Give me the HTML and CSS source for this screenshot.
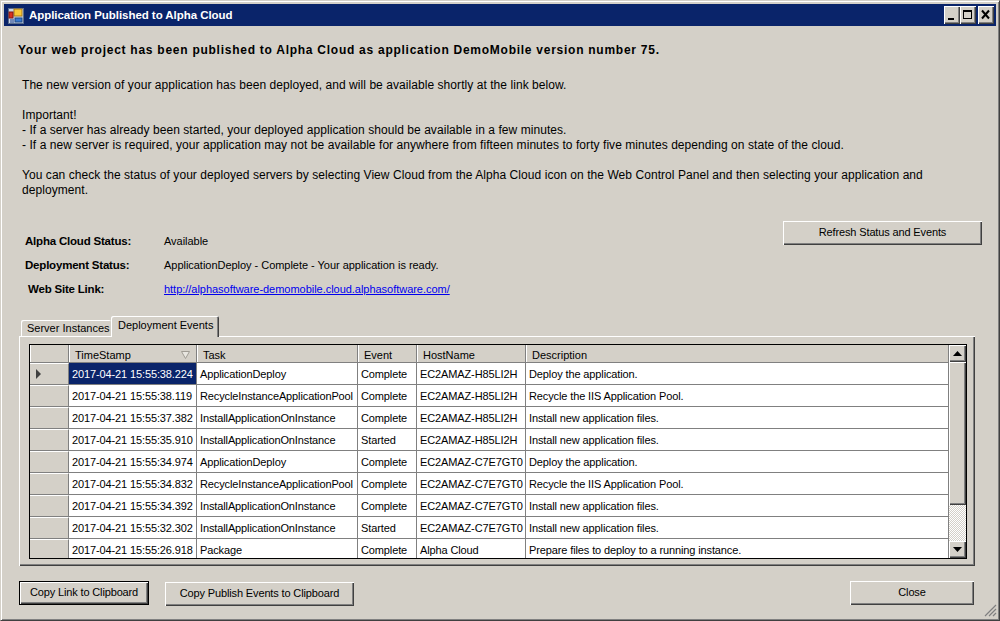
FILE: index.html
```html
<!DOCTYPE html>
<html lang="en">
<head>
<meta charset="utf-8">
<title>Application Published to Alpha Cloud</title>
<link rel="stylesheet" href="styles.css">
</head>
<body>
<div class="window">
  <header class="titlebar">
    <svg class="app-icon" width="16" height="16" viewBox="0 0 16 16">
      <rect x="0.5" y="0.5" width="15" height="15" fill="#c8d4e8" stroke="#5a6c8c"/>
      <rect x="6" y="1" width="8" height="7" fill="#f8c838" stroke="#a87818"/>
      <rect x="1" y="4" width="4" height="6" fill="#d83020" stroke="#801810"/>
      <rect x="2" y="11" width="4" height="4" fill="#7088b8"/>
      <rect x="7" y="10" width="7" height="4" fill="#3878d0" stroke="#204880"/>
    </svg>
    <span class="title-text">Application Published to Alpha Cloud</span>
    <div class="win-buttons">
      <button class="win-btn" aria-label="Minimize"><svg width="16" height="18" viewBox="0 0 16 18"><rect x="4" y="12" width="6" height="2" fill="#000"/></svg></button>
      <button class="win-btn" aria-label="Maximize"><svg width="16" height="18" viewBox="0 0 16 18"><path d="M3 4h9v9H3z M4 6v6h7V6z" fill="#000" fill-rule="evenodd"/></svg></button>
      <button class="win-btn win-close" aria-label="Close"><svg width="16" height="18" viewBox="0 0 16 18"><path d="M4 4.5l7 8M11 4.5l-7 8" stroke="#000" stroke-width="2" fill="none"/></svg></button>
    </div>
  </header>

  <main class="content">
    <h1 class="headline">Your web project has been published to Alpha Cloud as application DemoMobile version number 75.</h1>
    <div class="message">
      <p>The new version of your application has been deployed, and will be available shortly at the link below.</p>
      <p>Important!<br>- If a server has already been started, your deployed application should be available in a few minutes.<br>- If a new server is required, your application may not be available for anywhere from fifteen minutes to forty five minutes depending on state of the cloud.</p>
      <p>You can check the status of your deployed servers by selecting View Cloud from the Alpha Cloud icon on the Web Control Panel and then selecting your application and<br>deployment.</p>
    </div>

    <section class="status">
      <dl class="status-list">
        <dt>Alpha Cloud Status:</dt><dd>Available</dd>
        <dt>Deployment Status:</dt><dd>ApplicationDeploy - Complete - Your application is ready.</dd>
        <dt class="indent">Web Site Link:</dt><dd><a href="#">http://alphasoftware-demomobile.cloud.alphasoftware.com/</a></dd>
      </dl>
      <button class="btn btn-refresh">Refresh Status and Events</button>
    </section>

    <nav class="tabs">
      <span class="tab">Server Instances</span>
      <span class="tab tab-active">Deployment Events</span>
    </nav>
    <section class="tab-panel">
      <div class="table-frame">
        <div class="grid">
          <div class="hd corner"></div>
          <div class="hd hd-sort">TimeStamp<svg class="sort" width="9" height="8" viewBox="0 0 9 8"><path d="M0.5 0.5h8L4.5 7.5z" fill="#e8e6e0" stroke="#a09c94"/></svg></div>
          <div class="hd">Task</div><div class="hd">Event</div><div class="hd">HostName</div><div class="hd">Description</div>

          <div class="rh"><svg width="6" height="10" viewBox="0 0 6 10"><path d="M0 0l5 5l-5 5z" fill="#404040"/></svg></div>
          <div class="c sel">2017-04-21 15:55:38.224</div><div class="c">ApplicationDeploy</div><div class="c">Complete</div><div class="c">EC2AMAZ-H85LI2H</div><div class="c">Deploy the application.</div>

          <div class="rh"></div>
          <div class="c">2017-04-21 15:55:38.119</div><div class="c">RecycleInstanceApplicationPool</div><div class="c">Complete</div><div class="c">EC2AMAZ-H85LI2H</div><div class="c">Recycle the IIS Application Pool.</div>

          <div class="rh"></div>
          <div class="c">2017-04-21 15:55:37.382</div><div class="c">InstallApplicationOnInstance</div><div class="c">Complete</div><div class="c">EC2AMAZ-H85LI2H</div><div class="c">Install new application files.</div>

          <div class="rh"></div>
          <div class="c">2017-04-21 15:55:35.910</div><div class="c">InstallApplicationOnInstance</div><div class="c">Started</div><div class="c">EC2AMAZ-H85LI2H</div><div class="c">Install new application files.</div>

          <div class="rh"></div>
          <div class="c">2017-04-21 15:55:34.974</div><div class="c">ApplicationDeploy</div><div class="c">Complete</div><div class="c">EC2AMAZ-C7E7GT0</div><div class="c">Deploy the application.</div>

          <div class="rh"></div>
          <div class="c">2017-04-21 15:55:34.832</div><div class="c">RecycleInstanceApplicationPool</div><div class="c">Complete</div><div class="c">EC2AMAZ-C7E7GT0</div><div class="c">Recycle the IIS Application Pool.</div>

          <div class="rh"></div>
          <div class="c">2017-04-21 15:55:34.392</div><div class="c">InstallApplicationOnInstance</div><div class="c">Complete</div><div class="c">EC2AMAZ-C7E7GT0</div><div class="c">Install new application files.</div>

          <div class="rh"></div>
          <div class="c">2017-04-21 15:55:32.302</div><div class="c">InstallApplicationOnInstance</div><div class="c">Started</div><div class="c">EC2AMAZ-C7E7GT0</div><div class="c">Install new application files.</div>

          <div class="rh"></div>
          <div class="c">2017-04-21 15:55:26.918</div><div class="c">Package</div><div class="c">Complete</div><div class="c">Alpha Cloud</div><div class="c">Prepare files to deploy to a running instance.</div>
        </div>
        <div class="scrollbar">
          <div class="sb-btn"><svg width="9" height="5" viewBox="0 0 9 5"><path d="M4.5 0L9 5H0z" fill="#000"/></svg></div>
          <div class="sb-thumb"></div>
          <div class="sb-track"></div>
          <div class="sb-btn"><svg width="9" height="5" viewBox="0 0 9 5"><path d="M0 0h9L4.5 5z" fill="#000"/></svg></div>
        </div>
      </div>
    </section>

    <footer class="actions">
      <button class="btn btn-default btn-copy-link">Copy Link to Clipboard</button>
      <button class="btn btn-copy-events">Copy Publish Events to Clipboard</button>
      <button class="btn btn-close">Close</button>
    </footer>
  </main>
  <svg class="grip" width="13" height="13" viewBox="0 0 13 13"><path d="M1 12L12 1M5 12l7-7M9 12l3-3" stroke="#808080" stroke-width="1.2" fill="none"/></svg>
</div>
</body>
</html>
```
FILE: styles.css
```css
* { box-sizing: border-box; }
html, body { margin: 0; padding: 0; }
body {
  width: 1000px;
  height: 621px;
  overflow: hidden;
  font-family: "Liberation Sans", Arial, sans-serif;
  font-size: 11px;
  color: #000;
  background: #d4d0c8;
}
.window {
  position: relative;
  width: 1000px;
  height: 621px;
  display: flex;
  flex-direction: column;
  padding: 3px 3px 4px 4px;
  background: #d4d0c8;
  border-top: 1px solid #d4d0c8;
  border-left: 1px solid #d4d0c8;
  border-right: 1px solid #404040;
  border-bottom: 1px solid #404040;
  box-shadow: inset 1px 1px 0 #fff, inset -1px -1px 0 #808080;
}
.titlebar {
  flex: none;
  display: flex;
  align-items: center;
  height: 22px;
  margin: 0 0 0 -1px;
  padding: 0 2px 0 4px;
  background: #0a246a;
  color: #fff;
}
.app-icon { flex: none; margin-top: 1px; }
.title-text {
  margin-left: 5px;
  font-size: 11.5px;
  font-weight: bold;
  letter-spacing: -0.05px;
}
.win-buttons { margin-left: auto; display: flex; }
.win-btn {
  width: 16px;
  height: 18px;
  padding: 0;
  border: 0;
  background: #d4d0c8;
  box-shadow: inset 1px 1px 0 #fff, inset -1px -1px 0 #404040, inset -2px -2px 0 #808080;
  display: block;
}
.win-btn svg { display: block; }
.win-close { margin-left: 2px; }
.content { flex: 1; min-height: 0; padding-left: 14px; }
.headline {
  margin: 15px 0 0 -1px;
  height: 18px;
  font-size: 12px;
  line-height: 18px;
  font-weight: bold;
  letter-spacing: 0.74px;
  white-space: nowrap;
}
.message {
  margin: 19px 0 0 3px;
  font-size: 12px;
  letter-spacing: 0.06px;
  line-height: 15px;
  white-space: nowrap;
}
.message p { margin: 0 0 15px; }
.message p:last-child { margin: 0; }
.status {
  display: flex;
  align-items: flex-start;
  justify-content: space-between;
  height: 96px;
  margin-top: 23px;
  padding-right: 14px;
}
.status-list {
  margin: 8px 0 0 6px;
  display: grid;
  grid-template-columns: 139px auto;
  grid-auto-rows: 24px;
  line-height: 24px;
}
.status-list dt { font-size: 11.5px; font-weight: bold; letter-spacing: -0.2px; }
.status-list dd { margin: 0; letter-spacing: -0.03px; }
.status-list .indent { padding-left: 3px; }
.status-list a { color: #0000ee; }
.btn {
  font-family: inherit;
  font-size: 11px;
  letter-spacing: -0.14px;
  color: #000;
  height: 24px;
  padding: 0 0 2px;
  border: 0;
  background: #d4d0c8;
  box-shadow: inset 1px 1px 0 #fff, inset -1px -1px 0 #404040, inset -2px -2px 0 #808080;
}
.btn-refresh { width: 199px; }
.tabs { display: flex; align-items: flex-end; height: 19px; margin-left: 2px; }
.tab {
  height: 16px;
  width: 90px;
  padding-left: 6px;
  line-height: 17px;
  white-space: nowrap;
  background: #d4d0c8;
  border-radius: 2px 2px 0 0;
  box-shadow: inset 1px 1px 0 #fff;
}
.tab-active {
  position: relative;
  width: 108px;
  height: 21px;
  margin-bottom: -1px;
  padding: 2px 0 0 7px;
  line-height: 15px;
  box-shadow: inset 1px 1px 0 #fff, inset -1px 0 0 #404040, inset -2px 0 0 #808080;
}
.tab-panel {
  width: 956px;
  height: 230px;
  padding: 8px 7px 0 10px;
  background: #d4d0c8;
  box-shadow: inset 1px 1px 0 #fff, inset -1px -1px 0 #404040, inset -2px -2px 0 #808080;
}
.table-frame {
  display: flex;
  width: 938px;
  height: 215px;
  border: 1px solid #000;
  background: #fff;
}
.grid {
  flex: none;
  width: 919px;
  height: 213px;
  overflow: hidden;
  display: grid;
  grid-template-columns: 39px 128px 161px 59px 109px 423px;
  grid-template-rows: 18px;
  grid-auto-rows: 22px;
}
.hd {
  position: relative;
  background: #d4d0c8;
  padding-left: 6px;
  line-height: 20px;
  border-bottom: 1px solid #808080;
  box-shadow: inset 1px 0 0 #fff, inset -1px 0 0 #808080;
  white-space: nowrap;
  overflow: hidden;
}
.corner { padding: 0; }
.sort { position: absolute; right: 7px; top: 6px; }
.rh {
  display: flex;
  align-items: center;
  padding-left: 6px;
  background: #d4d0c8;
  border-top: 1px solid #fff;
  border-bottom: 1px solid #808080;
  border-right: 1px solid #808080;
}
.c {
  padding-left: 3px;
  line-height: 22px;
  letter-spacing: -0.12px;
  border-right: 1px solid #808080;
  border-bottom: 1px solid #808080;
  white-space: nowrap;
  overflow: hidden;
}
.sel { background: #0a246a; color: #fff; }
.scrollbar {
  flex: none;
  width: 17px;
  height: 213px;
  display: flex;
  flex-direction: column;
  background: #d4d0c8;
}
.sb-btn {
  flex: none;
  height: 17px;
  display: flex;
  align-items: center;
  justify-content: center;
  background: #d4d0c8;
  box-shadow: inset 1px 1px 0 #fff, inset -1px -1px 0 #404040, inset -2px -2px 0 #808080;
}
.sb-thumb {
  flex: none;
  height: 143px;
  background: #d4d0c8;
  box-shadow: inset 1px 1px 0 #fff, inset -1px -1px 0 #404040, inset -2px -2px 0 #808080;
}
.sb-track {
  flex: 1;
  background-color: #fff;
  background-image: conic-gradient(#d4d0c8 25%, #fff 0 50%, #d4d0c8 0 75%, #fff 0);
  background-size: 2px 2px;
}
.actions {
  display: flex;
  align-items: flex-start;
  margin-top: 15px;
  width: 955px;
}
.btn-default {
  width: 130px;
  height: 24px;
  border: 1px solid #000;
}
.btn-copy-events { width: 189px; margin: 1px 0 0 16px; }
.btn-close { width: 124px; margin-left: auto; }
.grip { position: absolute; right: 2px; bottom: 3px; }
```
